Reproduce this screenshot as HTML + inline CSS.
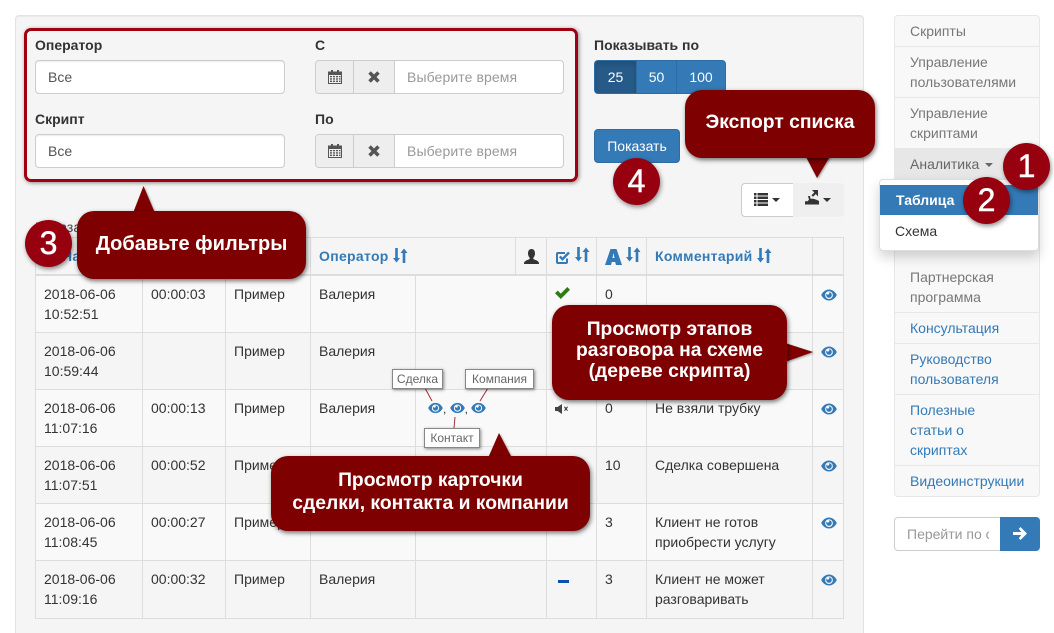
<!DOCTYPE html>
<html lang="ru"><head><meta charset="utf-8"><title>Аналитика</title>
<style>
*{box-sizing:border-box}
html,body{margin:0;padding:0;width:1054px;height:633px;overflow:hidden;background:#fff}
body{font:14px/20px "Liberation Sans",sans-serif;color:#333;position:relative}
.a{position:absolute}
.well{left:15px;top:15px;width:849px;height:640px;background:#f5f5f5;border:1px solid #e3e3e3;border-radius:4px;box-shadow:inset 0 1px 1px rgba(0,0,0,.05)}
.redbox{left:24px;top:28px;width:554px;height:154px;border:3px solid #a00012;border-radius:7px;box-shadow:1px 1px 4px rgba(0,0,0,.45)}
.lbl{font-weight:bold}
.inp{background:#fff;border:1px solid #ccc;border-radius:4px;height:34px;padding:6px 12px;color:#555;box-shadow:inset 0 1px 1px rgba(0,0,0,.075)}
.dt{display:flex;width:249px;height:34px;border:1px solid #ccc;border-radius:4px;overflow:hidden;background:#fff}
.dt i{display:flex;align-items:center;justify-content:center;width:38px;background:#eee;border-right:1px solid #ccc;font-style:normal}
.dt i+i{width:41px}
.dt i+i svg{margin-right:1px}
.dt span{padding:6px 12px;color:#999;letter-spacing:.1px}
.btn{background:#337ab7;color:#fff;border:1px solid #2e6da4;text-align:center;height:34px;line-height:32px}
table{position:absolute;left:35px;top:237px;width:808px;border-collapse:collapse;table-layout:fixed}
td,th{border:1px solid #ddd;padding:8px 8px 0 8px;vertical-align:top;text-align:left;font-weight:normal;height:57px}
tbody tr:first-child td,tbody tr:last-child td{height:58px}
th{height:37px;padding-top:8px;font-weight:bold;color:#337ab7;border-bottom:2px solid #ddd;background:#f5f5f5;white-space:nowrap;letter-spacing:.3px}
tbody tr:nth-child(odd) td{background:#f9f9f9}
th svg{vertical-align:-2px}
td svg.e{display:block;margin:5px 0 0 0}
.side{left:894px;top:15px;width:146px;height:482px;background:#f8f8f8;border:1px solid #e7e7e7;border-radius:4px;color:#777}
.side div{position:absolute;left:0;width:144px;padding:0 15px;border-bottom:1px solid #e7e7e7}
.side .b{color:#337ab7}
.drop{left:879px;top:179px;width:160px;height:72px;background:#fff;border:1px solid #ddd;border-radius:4px;box-shadow:0 6px 12px rgba(0,0,0,.175);z-index:2}
.call{position:absolute;background:#7f0000;border-radius:17px;color:#fff;font-weight:bold;font-size:19.3px;line-height:21px;text-align:center;box-shadow:1px 2px 5px rgba(0,0,0,.55);display:flex;align-items:center;justify-content:center;z-index:5}
.tip{position:absolute;z-index:5;overflow:visible;filter:drop-shadow(1px 1px 1px rgba(0,0,0,.35))}
.num{position:absolute;width:47px;height:47px;border-radius:50%;background:#96000f;color:#fff;font-size:32px;font-weight:normal;-webkit-text-stroke:.5px #fff;line-height:47px;text-align:center;box-shadow:1px 2px 5px rgba(0,0,0,.45);z-index:6}
.tag{position:absolute;background:#fff;border:1px solid #888;color:#666;font-size:12px;line-height:18px;height:20px;text-align:center;box-shadow:1px 1px 3px rgba(0,0,0,.45);z-index:4}
.car{display:inline-block;width:0;height:0;border-left:4px solid transparent;border-right:4px solid transparent;border-top:4px solid currentColor;vertical-align:middle}
</style></head><body>
<svg width="0" height="0" style="position:absolute">
<defs>
<symbol id="eye" viewBox="0 0 16 12"><path fill="#337ab7" fill-rule="evenodd" d="M8 .5C4.400.5 1.600 3 .2 6c1.400 3 4.200 5.500 7.800 5.500S14.400 9 15.800 6C14.400 3 11.600.5 8 .5zM8 2.200A3.900 3.900 0 1 1 8 10 3.900 3.900 0 0 1 8 2.200z"/><path fill="#337ab7" d="M8 3.200A2.800 2.800 0 1 1 5.200 6c0-.5.1-1 .4-1.400.2.600.7 1 1.300 1 .8 0 1.400-.6 1.400-1.400 0-.6-.4-1.100-.9-1H8z"/></symbol>
<symbol id="sort" viewBox="0 0 15 15"><path fill="#337ab7" d="M2.200 0h2.600v10H7L3.500 14.500 0 10h2.200zM9.700 15h2.600V5h2.200L11 .5 7.500 5h2.200z"/></symbol>
<symbol id="cal" viewBox="0 0 14 14"><path fill="#555" fill-rule="evenodd" d="M3 0h2v1.500h4V0h2v1.500h3V14H0V1.500h3zM1 5v8h12V5zM2 6h2v1.300H2zM5 6h2v1.300H5zM8 6h2v1.300H8zM11 6h1.500v1.300H11zM2 8.300h2v1.300H2zM5 8.300h2v1.300H5zM8 8.300h2v1.300H8zM11 8.300h1.500v1.300H11zM2 10.600h2V12H2zM5 10.600h2V12H5zM8 10.600h2V12H8zM11 10.600h1.500V12H11z"/></symbol>
<symbol id="x" viewBox="0 0 12 12"><path fill="#555" d="M2.800.3 6 3.500 9.200.3l2.500 2.500L8.500 6l3.200 3.200-2.500 2.500L6 8.500l-3.200 3.200L.3 9.200 3.500 6 .3 2.800z"/></symbol>
</defs></svg>

<div class="a well"></div>
<div class="a redbox"></div>
<div class="a lbl" style="left:35px;top:35px">Оператор</div>
<div class="a inp" style="left:35px;top:60px;width:250px">Все</div>
<div class="a lbl" style="left:35px;top:109px">Скрипт</div>
<div class="a inp" style="left:35px;top:134px;width:250px">Все</div>
<div class="a lbl" style="left:315px;top:35px">С</div>
<div class="a dt" style="left:315px;top:60px"><i><svg width="14" height="14"><use href="#cal"/></svg></i><i><svg width="12" height="12"><use href="#x"/></svg></i><span>Выберите время</span></div>
<div class="a lbl" style="left:315px;top:109px">По</div>
<div class="a dt" style="left:315px;top:134px"><i><svg width="14" height="14"><use href="#cal"/></svg></i><i><svg width="12" height="12"><use href="#x"/></svg></i><span>Выберите время</span></div>

<div class="a lbl" style="left:594px;top:35px">Показывать по</div>
<div class="a btn" style="left:594px;top:60px;width:43px;border-radius:4px 0 0 4px;background:#265a88;box-shadow:inset 0 3px 5px rgba(0,0,0,.125)">25</div>
<div class="a btn" style="left:636px;top:60px;width:41px">50</div>
<div class="a btn" style="left:676px;top:60px;width:50px;border-radius:0 4px 4px 0">100</div>
<div class="a btn" style="left:594px;top:129px;width:86px;border-radius:4px">Показать</div>

<div class="a" style="left:741px;top:183px;width:52px;height:34px;background:#fff;border:1px solid #ccc;border-right:0;border-radius:4px 0 0 4px"></div>
<div class="a" style="left:793px;top:183px;width:51px;height:34px;background:#efefef;border-radius:0 4px 4px 0"></div>
<svg class="a" style="left:754px;top:193px" width="14" height="13"><path fill="#333" d="M0 0h2.500v2.500H0zM3.500 0H14v2.500H3.500zM0 3.500h2.500V6H0zM3.500 3.500H14V6H3.500zM0 7h2.500v2.500H0zM3.500 7H14v2.500H3.500zM0 10.500h2.500V13H0zM3.500 10.500H14V13H3.500z"/></svg>
<span class="a car" style="left:772px;top:198px;border-left-width:4px;color:#333"></span>
<svg class="a" style="left:805px;top:190px" width="14" height="15"><path fill="#333" d="M5 0h8v6.500L10.800 4 8 6.800 6.500 5.200 9.300 2.500 7 0zM3 6l2 0 .5 2.800h3L12 10l2 1v3.500H0V11.200h2.500L4 9.700z"/></svg>
<span class="a car" style="left:823px;top:198px;color:#333"></span>

<div class="a" style="left:35px;top:217px;color:#444">Показано</div>

<table>
<colgroup><col style="width:107px"><col style="width:83px"><col style="width:85px"><col style="width:105px"><col style="width:100px"><col style="width:31px"><col style="width:50px"><col style="width:50px"><col style="width:166px"><col style="width:31px"></colgroup>
<thead><tr>
<th style="padding-left:26px">Начало</th>
<th>Длит.</th>
<th>Скрипт</th>
<th colspan="2">Оператор <svg width="15" height="15"><use href="#sort"/></svg></th>
<th style="padding:9px 0 0 8px"><svg width="15" height="15" viewBox="0 0 15 15"><path fill="#333" d="M7.500 0C10 0 11 2 11 4.500c0 2-1 3.500-1.800 4.500 0 1 .5 1.300 2.300 2 1.800.7 3.500 1.500 3.500 3.500V15H0v-.5c0-2 1.700-2.800 3.500-3.500s2.300-1 2.300-2C5 8 4 6.500 4 4.500 4 2 5 0 7.500 0z"/></svg></th>
<th style="padding-top:9px"><svg width="16" height="16" viewBox="0 0 16 16"><path fill="none" stroke="#337ab7" stroke-width="2" d="M12 9.500V13a1 1 0 0 1-1 1H3a1 1 0 0 1-1-1V5a1 1 0 0 1 1-1h7"/><path fill="none" stroke="#337ab7" stroke-width="2.400" d="M4.800 7.500 7.500 10.200 14 3.500"/></svg> <svg width="15" height="15" style="vertical-align:1px"><use href="#sort"/></svg></th>
<th style="padding-top:9px"><svg width="17" height="16" viewBox="0 0 17 16"><path fill="#337ab7" fill-rule="evenodd" d="M5.500 0h6L17 16h-6l-.8-3H6.800L6 16H0zM7.500 9h2L8.500 4z"/></svg> <svg width="15" height="15" style="vertical-align:1px"><use href="#sort"/></svg></th>
<th>Комментарий <svg width="15" height="15"><use href="#sort"/></svg></th>
<th></th>
</tr></thead>
<tbody>
<tr><td>2018-06-06 10:52:51</td><td>00:00:03</td><td>Пример</td><td>Валерия</td><td colspan="2"></td><td style="padding-top:11px"><svg width="15" height="12" viewBox="0 0 15 12" style="display:block"><path fill="#2d7d12" d="M12.300 0 15 2.700 5.800 12 0 6.200l2.700-2.600 3.100 3z"/></svg></td><td>0</td><td></td><td><svg class="e" width="16" height="12"><use href="#eye"/></svg></td></tr>
<tr><td>2018-06-06 10:59:44</td><td></td><td>Пример</td><td>Валерия</td><td colspan="2"></td><td></td><td></td><td></td><td><svg class="e" width="16" height="12"><use href="#eye"/></svg></td></tr>
<tr><td>2018-06-06 11:07:16</td><td>00:00:13</td><td>Пример</td><td>Валерия</td><td colspan="2" style="padding:11px 0 0 12px;font-size:12px;line-height:16px;white-space:nowrap"><svg width="15" height="12" style="vertical-align:-1px"><use href="#eye"/></svg>, <svg width="15" height="12" style="vertical-align:-1px"><use href="#eye"/></svg>, <svg width="15" height="12" style="vertical-align:-1px"><use href="#eye"/></svg></td><td style="padding-top:14px"><svg width="14" height="10" viewBox="0 0 14 10" style="display:block"><path fill="#444" d="M0 3h2.500L7 0v10L2.500 7H0zM9 3l.8-.6L11 3.700l1.200-1.300.8.6L11.800 5 13 6.400l-.8.6L11 5.700 9.800 7 9 6.400 10.200 5z"/></svg></td><td>0</td><td>Не взяли трубку</td><td><svg class="e" width="16" height="12"><use href="#eye"/></svg></td></tr>
<tr><td>2018-06-06 11:07:51</td><td>00:00:52</td><td>Пример</td><td></td><td colspan="2"></td><td></td><td>10</td><td>Сделка совершена</td><td><svg class="e" width="16" height="12"><use href="#eye"/></svg></td></tr>
<tr><td>2018-06-06 11:08:45</td><td>00:00:27</td><td>Пример</td><td></td><td colspan="2"></td><td></td><td>3</td><td>Клиент не готов приобрести услугу</td><td><svg class="e" width="16" height="12"><use href="#eye"/></svg></td></tr>
<tr><td>2018-06-06 11:09:16</td><td>00:00:32</td><td>Пример</td><td>Валерия</td><td colspan="2"></td><td style="padding:19px 0 0 11px"><div style="width:11px;height:3px;background:#0b4fb3"></div></td><td>3</td><td>Клиент не может разговаривать</td><td><svg class="e" width="16" height="12"><use href="#eye"/></svg></td></tr>
</tbody></table>

<!-- sidebar -->
<div class="a side">
<div style="top:0;height:31px;padding-top:5px">Скрипты</div>
<div style="top:31px;height:51px;padding-top:5px">Управление пользователями</div>
<div style="top:82px;height:51px;padding-top:5px">Управление скриптами</div>
<div style="top:133px;height:31px;padding-top:5px;background:#e7e7e7;color:#666">Аналитика <span class="car" style="margin-left:2px"></span></div>
<div style="top:246px;height:51px;padding-top:5px">Партнерская программа</div>
<div class="b" style="top:297px;height:31px;padding-top:5px">Консультация</div>
<div class="b" style="top:328px;height:51px;padding-top:5px">Руководство пользователя</div>
<div class="b" style="top:379px;height:71px;padding-top:5px">Полезные<br>статьи о<br>скриптах</div>
<div class="b" style="top:450px;height:30px;padding-top:5px;border-bottom:0">Видеоинструкции</div>
</div>
<div class="a drop">
<div class="a" style="left:0;top:5px;width:158px;height:30px;background:#337ab7;color:#fff;font-weight:bold;padding:5px 16px">Таблица</div>
<div class="a" style="left:15px;top:41px">Схема</div>
</div>
<div class="a" style="left:894px;top:517px;width:107px;height:34px;background:#fff;border:1px solid #ccc;border-radius:4px 0 0 4px;padding:6px 12px;color:#999"><div style="width:82px;overflow:hidden;white-space:nowrap">Перейти по ссылке</div></div>
<div class="a" style="left:1000px;top:517px;width:40px;height:34px;background:#337ab7;border-radius:0 4px 4px 0"></div>
<svg class="a" style="left:1013px;top:527px" width="14" height="13" viewBox="0 0 14 13"><path fill="#fff" d="M7.500 0 14 6.500 7.500 13 5.800 11.300 8.300 8H0V5h8.300L5.800 1.700z"/></svg>

<!-- small tags -->
<svg class="a" style="left:380px;top:380px;z-index:3" width="120" height="60"><path fill="none" stroke="#a03040" d="M45 8 52 21M108 8 100 21M75 37 74 48"/></svg>
<div class="tag" style="left:392px;top:369px;width:51px">Сделка</div>
<div class="tag" style="left:465px;top:369px;width:69px">Компания</div>
<div class="tag" style="left:424px;top:428px;width:56px">Контакт</div>

<!-- callouts -->
<svg class="tip" style="left:130px;top:186px" width="30" height="28"><path fill="#7f0000" d="M13.500 0 25 27H3z"/></svg>
<div class="call" style="left:77px;top:211px;width:229px;height:68px;font-size:20px;padding-bottom:2px">Добавьте фильтры</div>
<svg class="tip" style="left:805px;top:155px" width="27" height="24"><path fill="#7f0000" d="M0 0H26L12 23z"/></svg>
<div class="call" style="left:685px;top:90px;width:190px;height:68px;padding-bottom:4px">Экспорт списка</div>
<svg class="tip" style="left:785px;top:342px" width="30" height="21"><path fill="#7f0000" d="M0 1 28 10 0 20z"/></svg>
<div class="call" style="left:552px;top:305px;width:235px;height:95px;padding-bottom:4px">Просмотр этапов<br>разговора на схеме<br>(дереве скрипта)</div>
<svg class="tip" style="left:487px;top:433px" width="26" height="26"><path fill="#7f0000" d="M12 0 25 25H1z"/></svg>
<div class="call" style="left:271px;top:456px;width:319px;height:75px;line-height:23px;padding-bottom:4px">Просмотр карточки<br>сделки, контакта и компании</div>

<div class="num" style="left:25px;top:220px">3</div>
<div class="num" style="left:613px;top:158px">4</div>
<div class="num" style="left:1003px;top:143px">1</div>
<div class="num" style="left:963px;top:177px">2</div>
</body></html>
